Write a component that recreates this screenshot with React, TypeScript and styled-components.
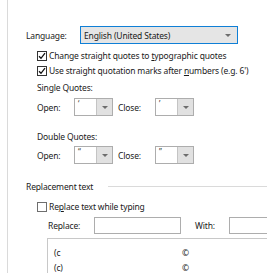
import React from "react";
import styled, { createGlobalStyle } from "styled-components";

const Global = createGlobalStyle`
  html, body { margin: 0; padding: 0; background: #ffffff; }
  body { width: 267px; height: 273px; overflow: hidden; font-family: "Noto Sans", "Segoe UI", sans-serif; font-size: 8.5px; letter-spacing: -0.15px; color: #1a1a1a; }
`;

const Page = styled.div`
  display: flex;
  width: 267px;
  height: 273px;
  padding-left: 7px;
  box-sizing: border-box;
  overflow: hidden;
`;

const Panel = styled.div`
  flex: 1;
  border-left: 1px solid #dadada;
  padding-left: 18px;
  display: flex;
  flex-direction: column;
  min-width: 0;
`;

const Rule = styled.div`
  margin-top: 16px;
  margin-left: 1px;
  height: 1px;
  background: #dadada;
`;

const Row = styled.div<{ $top: number; $h: number; $indent?: number }>`
  display: flex;
  align-items: center;
  margin-top: ${(p) => p.$top}px;
  height: ${(p) => p.$h}px;
  padding-left: ${(p) => p.$indent ?? 0}px;
  white-space: nowrap;
  flex-shrink: 0;
`;

const Label = styled.span<{ $w?: number; $pad?: number }>`
  display: inline-block;
  box-sizing: border-box;
  width: ${(p) => (p.$w ? `${p.$w}px` : "auto")};
  padding-left: ${(p) => p.$pad ?? 0}px;
  flex-shrink: 0;
`;

const LangCombo = styled.div`
  width: 158px;
  height: 18px;
  box-sizing: border-box;
  border: 1px solid #0f7fd6;
  background: #e5e5e5;
  display: flex;
  align-items: center;
  padding-left: 3px;
  padding-right: 6px;
  justify-content: space-between;
`;

const Arrow = styled.span`
  width: 0;
  height: 0;
  border-left: 3px solid transparent;
  border-right: 3px solid transparent;
  border-top: 3px solid #6d6d6d;
`;

const CheckBox = styled.span<{ $checked?: boolean }>`
  width: 10px;
  height: 10px;
  box-sizing: border-box;
  border: 1px solid ${(p) => (p.$checked ? "#333" : "#6e6e6e")};
  background: #fff;
  display: flex;
  align-items: center;
  justify-content: center;
  margin-right: 2px;
  flex-shrink: 0;
`;

const QuoteCombo = styled.div`
  width: 39px;
  height: 18px;
  box-sizing: border-box;
  border: 1px solid #adadad;
  background: #fff;
  display: flex;
  flex-shrink: 0;
`;

const QuoteValue = styled.span`
  flex: 1;
  padding-left: 3px;
  font-size: 8px;
  line-height: 10px;
  color: #3a3a3a;
`;

const DropBtn = styled.span`
  width: 15px;
  background: #e1e1e1;
  border-left: 1px solid #c4c4c4;
  display: flex;
  align-items: center;
  justify-content: center;
`;

const SectionTitle = styled.span`
  flex-shrink: 0;
`;

const SectionLine = styled.span`
  flex: 1;
  height: 1px;
  background: #dadada;
  margin-left: 15px;
  margin-top: -1px;
`;

const Input = styled.div<{ $w: number }>`
  width: ${(p) => p.$w}px;
  height: 17px;
  box-sizing: border-box;
  border: 1px solid #adadad;
  background: #fff;
  flex-shrink: 0;
`;

const ListBox = styled.div`
  margin-top: 4px;
  margin-left: 21px;
  border-top: 1px solid #c8c8c8;
  border-left: 1px solid #c8c8c8;
  flex: 1;
  padding-top: 6px;
`;

const ListItem = styled.div`
  display: flex;
  height: 15px;
  align-items: center;
  padding-left: 6px;
`;

const ListKey = styled.span`
  width: 128px;
  flex-shrink: 0;
`;

const U = styled.span`
  text-decoration: underline;
  text-underline-offset: 1px;
`;

const Check = () => (
  <svg width="8" height="8" viewBox="0 0 8 8">
    <path d="M1 4.2 L3 6.3 L7 1.2" fill="none" stroke="#111" strokeWidth="1.3" />
  </svg>
);

const QuoteSelect = ({ v }: { v: string }) => (
  <QuoteCombo>
    <QuoteValue>{v}</QuoteValue>
    <DropBtn>
      <Arrow />
    </DropBtn>
  </QuoteCombo>
);

export default function App() {
  return (
    <>
      <Global />
      <Page>
        <Panel>
          <Rule />
          <Row $top={10} $h={18}>
            <Label $w={54}>Language:</Label>
            <LangCombo>
              <span>English (United States)</span>
              <Arrow />
            </LangCombo>
          </Row>
          <Row $top={4} $h={15} $indent={11}>
            <CheckBox $checked>
              <Check />
            </CheckBox>
            <span>
              Change straight quotes to <U>t</U>ypographic quotes
            </span>
          </Row>
          <Row $top={0} $h={15} $indent={11}>
            <CheckBox $checked>
              <Check />
            </CheckBox>
            <span>
              Use straight quotation marks after <U>n</U>umbers (e.g. 6')
            </span>
          </Row>
          <Row $top={2} $h={15} $indent={11}>
            <Label>Single Quotes:</Label>
          </Row>
          <Row $top={3} $h={18} $indent={11}>
            <Label $w={37}>Open:</Label>
            <QuoteSelect v="‘" />
            <Label $w={42} $pad={5}>
              Close:
            </Label>
            <QuoteSelect v="’" />
          </Row>
          <Row $top={13} $h={15} $indent={11}>
            <Label>Double Quotes:</Label>
          </Row>
          <Row $top={2} $h={18} $indent={11}>
            <Label $w={37}>Open:</Label>
            <QuoteSelect v="“" />
            <Label $w={42} $pad={5}>
              Close:
            </Label>
            <QuoteSelect v="”" />
          </Row>
          <Row $top={15} $h={15}>
            <SectionTitle>Replacement text</SectionTitle>
            <SectionLine />
          </Row>
          <Row $top={5} $h={15} $indent={11}>
            <CheckBox />
            <span>
              Re<U>p</U>lace text while typing
            </span>
          </Row>
          <Row $top={3} $h={17} $indent={22}>
            <Label $w={46}>Replace:</Label>
            <Input $w={87} />
            <Label $w={48} $pad={14}>
              With:
            </Label>
            <Input $w={60} />
          </Row>
          <ListBox>
            <ListItem>
              <ListKey>(c</ListKey>
              <span>©</span>
            </ListItem>
            <ListItem>
              <ListKey>(c)</ListKey>
              <span>©</span>
            </ListItem>
          </ListBox>
        </Panel>
      </Page>
    </>
  );
}
